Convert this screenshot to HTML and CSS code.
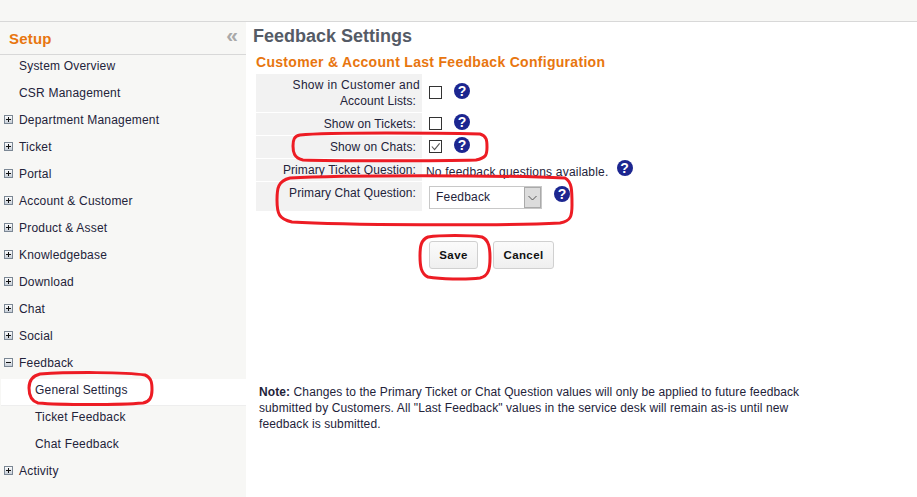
FILE: index.html
```html
<!DOCTYPE html>
<html lang="en">
<head>
<meta charset="utf-8">
<title>Feedback Settings</title>
<link rel="stylesheet" href="styles.css">
</head>
<body>
<svg width="0" height="0" class="defs">
  <defs>
    <linearGradient id="boxfill" x1="0" y1="0" x2="0" y2="1"><stop offset="0" stop-color="#fff"/><stop offset="1" stop-color="#c4ccd6"/></linearGradient>
    <symbol id="plus" viewBox="0 0 9 9"><rect x=".5" y=".5" width="8" height="8" fill="url(#boxfill)" stroke="#7b8794"/><path d="M2 4.5h5M4.5 2v5" stroke="#111" fill="none"/></symbol>
    <symbol id="minus" viewBox="0 0 9 9"><rect x=".5" y=".5" width="8" height="8" fill="url(#boxfill)" stroke="#7b8794"/><path d="M2 4.5h5" stroke="#111" fill="none"/></symbol>
  </defs>
</svg>
<div class="topbar"></div>
<div class="shell">
  <aside class="sidebar">
    <div class="side-head"><span class="side-title">Setup</span><span class="collapse">«</span></div>
    <ul class="menu">
      <li class="item"><span class="label">System Overview</span></li>
      <li class="item"><span class="label">CSR Management</span></li>
      <li class="item"><svg class="tree"><use href="#plus"/></svg><span class="label">Department Management</span></li>
      <li class="item"><svg class="tree"><use href="#plus"/></svg><span class="label">Ticket</span></li>
      <li class="item"><svg class="tree"><use href="#plus"/></svg><span class="label">Portal</span></li>
      <li class="item"><svg class="tree"><use href="#plus"/></svg><span class="label">Account &amp; Customer</span></li>
      <li class="item"><svg class="tree"><use href="#plus"/></svg><span class="label">Product &amp; Asset</span></li>
      <li class="item"><svg class="tree"><use href="#plus"/></svg><span class="label">Knowledgebase</span></li>
      <li class="item"><svg class="tree"><use href="#plus"/></svg><span class="label">Download</span></li>
      <li class="item"><svg class="tree"><use href="#plus"/></svg><span class="label">Chat</span></li>
      <li class="item"><svg class="tree"><use href="#plus"/></svg><span class="label">Social</span></li>
      <li class="item"><svg class="tree"><use href="#minus"/></svg><span class="label">Feedback</span></li>
      <li class="item sub active"><span class="label">General Settings</span></li>
      <li class="item sub"><span class="label">Ticket Feedback</span></li>
      <li class="item sub"><span class="label">Chat Feedback</span></li>
      <li class="item"><svg class="tree"><use href="#plus"/></svg><span class="label">Activity</span></li>
    </ul>
  </aside>
  <main class="main">
    <h1 class="page-title">Feedback Settings</h1>
    <h2 class="section-title">Customer &amp; Account Last Feedback Configuration</h2>
    <div class="form">
      <div class="row row-tall">
        <div class="cell-label"><span class="overhang">Show in Customer and</span><br>Account Lists:</div>
        <div class="cell-field field-tall"><span class="check"></span><span class="help">?</span></div>
      </div>
      <div class="row row-std">
        <div class="cell-label">Show on Tickets:</div>
        <div class="cell-field"><span class="check"></span><span class="help">?</span></div>
      </div>
      <div class="row row-std">
        <div class="cell-label">Show on Chats:</div>
        <div class="cell-field"><span class="check"><svg class="tick" viewBox="0 0 12 12"><path d="M2 6l3 3.5L10.500 2.500" fill="none" stroke="#555" stroke-width="1.200"/></svg></span><span class="help">?</span></div>
      </div>
      <div class="row row-std">
        <div class="cell-label">Primary Ticket Question:</div>
        <div class="cell-field field-text"><span class="none-text">No feedback questions available.</span><span class="help help-b">?</span></div>
      </div>
      <div class="row row-select">
        <div class="cell-label">Primary Chat Question:</div>
        <div class="cell-field field-select">
          <div class="select"><span class="select-value">Feedback</span><span class="select-arrow"><svg width="9" height="6" viewBox="0 0 9 6"><path d="M.5 1l4 4 4-4" fill="none" stroke="#555"/></svg></span></div>
          <span class="help help-c">?</span>
        </div>
      </div>
    </div>
    <div class="actions">
      <button class="btn btn-save" type="button">Save</button>
      <button class="btn btn-cancel" type="button">Cancel</button>
    </div>
    <p class="note"><strong>Note:</strong> Changes to the Primary Ticket or Chat Question values will only be applied to future feedback submitted by Customers. All "Last Feedback" values in the service desk will remain as-is until new feedback is submitted.</p>
  </main>
</div>
<svg class="marks" width="917" height="497" viewBox="0 0 917 497">
  <g fill="none" stroke="#ed1c24" stroke-width="3">
    <path d="M300 135C330 132 440 133 480 134C487 136 487 141 487 147C487 155 486 158 476 160C440 161 330 161 303 160C294 158 293 152 293 146C293 140 294 136 300 135Z"/>
    <path d="M290 178C340 175 500 175 565 178C572 182 572 190 572 205C572 216 571 221 560 223C500 226 340 225 292 222C279 219 277 214 277 200C277 188 278 181 290 178Z"/>
    <path d="M428 237C440 235 470 235 482 237C489 240 490 248 490 258C490 268 489 276 480 278C465 280 440 279 428 277C421 274 420 266 420 256C420 246 421 240 428 237Z"/>
    <path d="M40 374C70 372 125 372 145 375C152 378 152 384 152 390C152 397 150 402 143 403C120 405 60 405 38 403C31 401 29 395 29 388C29 381 32 376 40 374Z"/>
  </g>
</svg>
</body>
</html>
```

FILE: styles.css
```css
* { box-sizing: border-box; }
html, body { margin: 0; padding: 0; }
body {
  width: 917px;
  height: 497px;
  overflow: hidden;
  position: relative;
  background: #fff;
  font-family: "Liberation Sans", Arial, sans-serif;
  font-size: 12px;
  letter-spacing: 0.2px;
  color: #23233a;
}
.defs { position: absolute; }
.topbar {
  height: 22px;
  background: #f7f7f5;
  border-bottom: 1px solid #d8d8d8;
}
.shell { display: flex; height: 475px; }
.sidebar {
  width: 246px;
  flex: none;
  background: #f7f7f5;
}
.side-head {
  height: 33px;
  padding: 0 8px 0 9px;
  display: flex;
  align-items: center;
  justify-content: space-between;
  border-bottom: 1px solid #d8d8d8;
}
.side-title {
  font-size: 15px;
  font-weight: bold;
  letter-spacing: 0.2px;
  color: #e8760f;
}
.collapse {
  font-size: 21px;
  font-weight: bold;
  line-height: 20px;
  margin-top: -6px;
  letter-spacing: 0;
  color: #a9a9a9;
}
.menu { list-style: none; margin: 0; padding: 0; }
.item {
  height: 27px;
  display: flex;
  align-items: center;
  position: relative;
  padding: 0 0 5px 19px;
}
.item.sub { padding-left: 35px; }
.item.active {
  background: #fff;
  margin-left: 1px;
  padding-left: 34px;
  border-bottom: 1px solid #eee;
}
.tree {
  position: absolute;
  left: 4px;
  top: 6px;
  width: 9px;
  height: 9px;
}
.main {
  flex: 1;
  min-width: 0;
  padding-left: 7px;
}
.page-title {
  margin: 3px 0 0;
  font-size: 18px;
  line-height: 22px;
  font-weight: bold;
  letter-spacing: 0;
  color: #555b66;
}
.section-title {
  margin: 6px 0 0 3px;
  font-size: 14px;
  line-height: 18px;
  font-weight: bold;
  letter-spacing: 0.3px;
  color: #e8760f;
}
.form { margin: 3px 0 0 3px; width: 400px; }
.row { display: flex; margin-bottom: 1px; }
.row-tall { height: 38px; }
.row-std { height: 22px; }
.row-select { height: 29px; margin-bottom: 0; }
.cell-label {
  width: 166px;
  flex: none;
  background: #f2f2f2;
  text-align: right;
  padding: 3px 6px 0 0;
  line-height: 16px;
  letter-spacing: 0.1px;
}
.overhang { margin-right: -4px; letter-spacing: 0.3px; }
.cell-field {
  flex: 1;
  position: relative;
  display: flex;
  align-items: flex-start;
  padding: 4px 0 0 7px;
}
.field-tall { padding-top: 12px; }
.check {
  width: 13px;
  height: 13px;
  border: 1px solid #333;
  background: #fff;
  display: block;
  flex: none;
}
.tick { display: block; width: 11px; height: 11px; }
.help {
  width: 16px;
  height: 16px;
  margin: -3px 0 0 12px;
  border-radius: 50%;
  background: #1c2690;
  color: #fff;
  font-weight: bold;
  font-size: 14px;
  letter-spacing: 0;
  line-height: 16px;
  text-align: center;
  flex: none;
}
.field-text { padding: 5px 0 0 4px; white-space: nowrap; }
.none-text { line-height: 16px; }
.help-b { margin: -4px 0 0 8px; }
.field-select { padding: 4px 0 0 7px; }
.select {
  width: 113px;
  height: 23px;
  border: 1px solid #c8c8c8;
  background: #fff;
  display: flex;
  justify-content: space-between;
  align-items: stretch;
  flex: none;
}
.select-value { padding-left: 6px; line-height: 21px; }
.select-arrow {
  width: 17px;
  background: #dcdcdc;
  border: 1px solid #aaa;
  display: flex;
  align-items: center;
  justify-content: center;
}
.help-c { margin: 0 0 0 12px; }
.actions {
  display: flex;
  gap: 15px;
  margin: 30px 0 0 176px;
}
.btn {
  height: 28px;
  padding: 0;
  border: 1px solid #d0d0d0;
  border-radius: 3px;
  background: linear-gradient(#fbfbfb, #efefef);
  font: bold 11.500px "Liberation Sans", Arial, sans-serif;
  letter-spacing: 0.4px;
  color: #111;
}
.btn-save { width: 49px; }
.btn-cancel { width: 61px; }
.note {
  margin: 115px 0 0 6px;
  width: 548px;
  line-height: 16px;
  letter-spacing: 0.1px;
}
.note strong { font-weight: bold; }
.marks {
  position: absolute;
  left: 0;
  top: 0;
  pointer-events: none;
}
```
